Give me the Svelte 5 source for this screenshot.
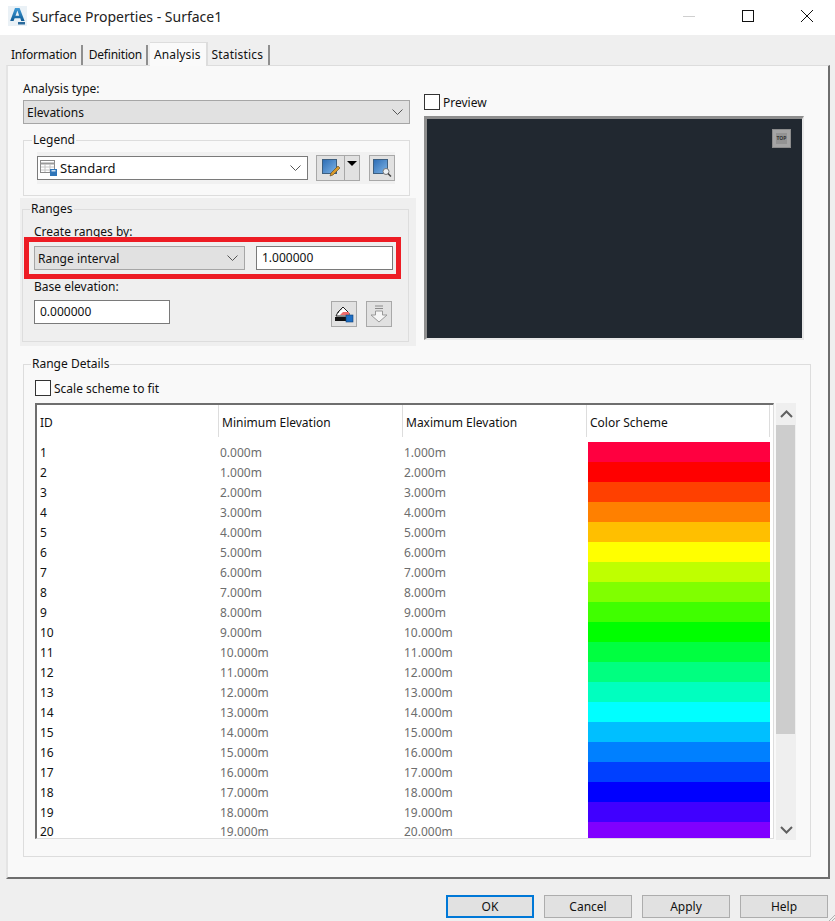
<script>
  const colors = ['#ff0040','#ff0000','#ff4000','#ff8000','#ffbf00','#ffff00','#bfff00','#80ff00','#40ff00','#00ff00','#00ff40','#00ff80','#00ffbf','#00ffff','#00bfff','#0080ff','#0040ff','#0000ff','#4000ff','#8000ff'];
  const rows = colors.map((color, i) => ({ id: i + 1, min: i.toFixed(3) + 'm', max: (i + 1).toFixed(3) + 'm', color }));
  const tabs = ['Information', 'Definition', 'Analysis', 'Statistics'];
</script>

<div class="window">
  <header class="titlebar">
    <svg class="logo" width="19" height="20" viewBox="0 0 19 20">
      <defs><linearGradient id="lg" x1="0" y1="0" x2="0" y2="1"><stop offset="0" stop-color="#3f9ad6"/><stop offset="1" stop-color="#0f5c96"/></linearGradient></defs>
      <rect width="19" height="20" fill="#eaf1f6"/>
      <path d="M7 2h4.600l5 13h-3.400l-.9-2.700H6.600L5.600 15H2.200zM7.500 9.800h3.700L9.400 4.600z" fill="url(#lg)"/>
      <rect x="10" y="16" width="7" height="2.500" fill="#2a6a9c"/>
    </svg>
    <span class="title">Surface Properties - Surface1</span>
    <div class="winbtns">
      <svg width="14" height="14" viewBox="0 0 14 14"><path d="M1 7.500h12" stroke="#cfcfcf" fill="none"/></svg>
      <svg width="14" height="14" viewBox="0 0 14 14"><rect x="1.500" y="1.500" width="11" height="11" fill="none" stroke="#111"/></svg>
      <svg width="14" height="14" viewBox="0 0 14 14"><path d="M1 1l12 12M13 1L1 13" stroke="#111" fill="none"/></svg>
    </div>
  </header>

  <nav class="tabs">
    {#each tabs as t}
      <div class="tab" class:active={t === 'Analysis'}>{t}</div>
    {/each}
  </nav>

  <main class="panel">
    <div class="upper">
      <div class="left">
        <div class="section">
          <div class="label">Analysis type:</div>
          <div class="combo gray wide">
            <span>Elevations</span>
            <svg class="chev" width="11" height="6" viewBox="0 0 11 6"><path d="M.5.500l5 5 5-5" fill="none" stroke="#555"/></svg>
          </div>
          <fieldset class="legend-box">
            <legend>Legend</legend>
            <div class="legend-row">
              <div class="combo white legend-combo">
                <svg class="tblicon" width="17" height="16" viewBox="0 0 17 16">
                  <rect x=".5" y=".5" width="14" height="12" fill="#fff" stroke="#8a8a8a"/>
                  <path d="M.5 3.500h14" stroke="#9a9a9a" stroke-width="2"/>
                  <path d="M5 4v8M10 4v8M1 7h13M1 10h13" stroke="#c4c4c4"/>
                  <rect x="10" y="9" width="7" height="7" fill="#2f75b8"/>
                  <rect x="11.500" y="10" width="4" height="1.500" fill="#cfe4f6"/>
                </svg>
                <span class="std">Standard</span>
                <svg class="chev" width="11" height="6" viewBox="0 0 11 6"><path d="M.5.500l5 5 5-5" fill="none" stroke="#555"/></svg>
              </div>
              <div class="split">
                <div class="iconbtn flat">
                  <svg width="20" height="20" viewBox="0 0 20 20">
                    <defs><linearGradient id="bl" x1="0" y1="0" x2="1" y2="1"><stop offset="0" stop-color="#2c6cb4"/><stop offset="1" stop-color="#7fb4e6"/></linearGradient></defs>
                    <rect x="1.500" y="1.500" width="14" height="14" fill="url(#bl)" stroke="#3d5f80"/>
                    <path d="M9 18l1-3 7-7 2 2-7 7z" fill="#d99a2b" stroke="#5a4520" stroke-width=".6"/>
                  </svg>
                </div>
                <div class="iconbtn drop"><svg width="10" height="5" viewBox="0 0 10 5"><path d="M0 0h10L5 5z" fill="#000"/></svg></div>
              </div>
              <div class="iconbtn">
                <svg width="20" height="20" viewBox="0 0 20 20">
                  <rect x="1.500" y="1.500" width="14" height="14" fill="url(#bl)" stroke="#3d5f80"/>
                  <circle cx="14" cy="13.500" r="3" fill="#eef2f5" stroke="#777"/>
                  <path d="M16 15.500l3 3" stroke="#444" stroke-width="1.500"/>
                </svg>
              </div>
            </div>
          </fieldset>
        </div>

        <div class="ranges-wrap">
          <fieldset class="ranges">
            <legend>Ranges</legend>
            <div class="label create">Create ranges by:</div>
            <div class="redbox">
              <div class="combo gray range-combo">
                <span>Range interval</span>
                <svg class="chev" width="11" height="6" viewBox="0 0 11 6"><path d="M.5.500l5 5 5-5" fill="none" stroke="#555"/></svg>
              </div>
              <div class="field interval">1.000000</div>
            </div>
            <div class="label base">Base elevation:</div>
            <div class="base-row">
              <div class="field base-field">0.000000</div>
              <div class="iconbtn">
                <svg width="20" height="20" viewBox="0 0 20 20">
                  <path d="M2 12l2-4 5-5 6 6v3z" fill="#fff" stroke="#222"/>
                  <path d="M4 9l5-6" stroke="#222" stroke-dasharray="1 1" fill="none"/>
                  <path d="M6 11l3-3h6v3z" fill="#ef6a6a"/>
                  <rect x="1" y="13" width="11" height="4" fill="#111"/>
                  <rect x="12" y="11" width="7" height="7" fill="#1e6fc4" stroke="#0f3f75" stroke-width=".6"/>
                </svg>
              </div>
              <div class="iconbtn">
                <svg width="20" height="20" viewBox="0 0 20 20">
                  <path d="M6 2h8M6 4.500h8" stroke="#8a8a8a"/>
                  <path d="M6.500 7h7v4h4.500L10 18 2 11h4.500z" fill="#f6f6f6" stroke="#999"/>
                </svg>
              </div>
            </div>
          </fieldset>
        </div>
      </div>

      <div class="right">
        <label class="check preview-check"><span class="box"></span><span>Preview</span></label>
        <div class="preview">
          <div class="cube"><span class="cube-inner">TOP</span></div>
        </div>
      </div>
    </div>

    <fieldset class="details">
      <legend>Range Details</legend>
      <label class="check scale"><span class="box"></span><span>Scale scheme to fit</span></label>
      <div class="table-row">
        <div class="table">
          <div class="thead">
            <div class="th first">ID</div>
            <div class="th">Minimum Elevation</div>
            <div class="th">Maximum Elevation</div>
            <div class="th last">Color Scheme</div>
          </div>
          {#each rows as r}
            <div class="tr">
              <div class="td id">{r.id}</div>
              <div class="td val">{r.min}</div>
              <div class="td val">{r.max}</div>
              <div class="swatch" style="background:{r.color}"></div>
            </div>
          {/each}
        </div>
        <div class="scrollbar">
          <div class="arrow"><svg width="13" height="8" viewBox="0 0 13 8"><path d="M1 7l5.500-5.500L12 7" fill="none" stroke="#606060" stroke-width="2"/></svg></div>
          <div class="thumb"></div>
          <div class="rest"></div>
          <div class="arrow down"><svg width="13" height="8" viewBox="0 0 13 8"><path d="M1 1l5.500 5.500L12 1" fill="none" stroke="#606060" stroke-width="2"/></svg></div>
        </div>
      </div>
    </fieldset>
  </main>

  <footer class="footer">
    <button class="ok">OK</button>
    <button>Cancel</button>
    <button>Apply</button>
    <button>Help</button>
  </footer>
  <svg class="grip" width="6" height="6" viewBox="0 0 6 6"><path d="M6 0L0 6M6 3L3 6" stroke="#b0b0b0" fill="none"/></svg>
</div>

<style>
  :global(body) { margin: 0; }
  .window {
    width: 835px; height: 921px; background: #efefef; overflow: hidden; position: relative;
    font-family: "Noto Sans", "Open Sans", sans-serif; font-size: 12px; color: #111; box-sizing: border-box;
  }
  .titlebar { height: 35px; background: #fff; display: flex; align-items: center; padding: 0 0 3px 8px; box-sizing: border-box; }
  .title { margin-left: 5px; font-size: 14px; color: #222; }
  .winbtns { margin-left: auto; display: flex; gap: 45px; padding-right: 21px; align-items: center; }
  .tabs { height: 30px; display: flex; align-items: flex-end; padding-left: 7px; box-sizing: border-box; }
  .tab {
    height: 20px; line-height: 20px; padding: 0 4px; border-right: 2px solid #8f8f8f; margin-right: 2px;
    position: relative; letter-spacing: -.2px;
  }
  .tab:last-child { letter-spacing: .2px; padding-right: 5px; }
  .tab.active { background: #fafafa; height: 23px; line-height: 24px; padding: 0 5px 0 4px; border-right: 2px solid #ddd; border-top: 1px solid #ddd; margin: 0 0 -1px 0; z-index: 1; letter-spacing: .1px; }
  .panel {
    width: 824px; height: 814px; margin-left: 6px; background: #f9f9f9; box-sizing: border-box;
    border-top: 1px solid #ddd; border-left: 2px solid #e4e4e4; border-right: 2px solid #6e6e6e; border-bottom: 2px solid #6e6e6e;
  }
  .upper { display: flex; height: 277px; }
  .left { width: 396px; margin-left: 12px; }
  .section { padding: 13px 6px 0 3px; }
  .label { height: 20px; line-height: 20px; }
  .combo { display: flex; align-items: center; box-sizing: border-box; height: 24px; border: 1px solid #a6a6a6; padding: 0 6px 0 3px; }
  .combo .chev { margin-left: auto; }
  .gray { background: #e1e1e1; }
  .white { background: #fff; border-color: #7a7a7a; }
  .wide { width: 387px; margin-top: 1px; }
  fieldset { margin: 0; padding: 0; border: 1px solid #ddd; min-width: 0; }
  legend { padding: 0 1px; line-height: 16px; }
  .legend-box { width: 387px; box-sizing: border-box; height: 64px; margin-top: 8px; }
  .legend-box legend { margin-left: 8px; }
  .legend-row {
    display: flex; align-items: center; margin: 4px 14px 0 13px; height: 32px; background: #f1f1f1;
  }
  .legend-combo { width: 271px; padding-left: 2px; flex: none; }
  .tblicon { margin-right: 3px; }
  .std { font-size: 13px; }
  .split { display: flex; margin-left: 8px; }
  .iconbtn {
    width: 26px; height: 26px; box-sizing: border-box; border: 1px solid #a8a8a8; background: #e1e1e1;
    display: flex; align-items: center; justify-content: center; flex: none;
  }
  .legend-row > .iconbtn { margin-left: 9px; }
  .iconbtn.flat { width: 28px; border-right: 0; }
  .iconbtn.drop { width: 16px; align-items: flex-start; padding-top: 5px; }
  .ranges-wrap { background: #efefef; padding: 3px 7px 4px 2px; height: 148px; box-sizing: border-box; margin-top: 2px; }
  .ranges { height: 141px; box-sizing: border-box; position: relative; }
  .ranges legend { margin-left: 7px; }
  .create { margin: 5px 0 0 11px; height: 15px; line-height: 20px; }
  .redbox {
    position: relative; box-sizing: border-box; width: 377px; height: 42px; margin-left: 1px; border: 5px solid #ed1c24;
    padding: 4px 3px 4px 5px; display: flex; justify-content: space-between; background: #efefef;
  }
  .range-combo { width: 211px; }
  .field { box-sizing: border-box; height: 24px; line-height: 22px; background: #fff; border: 1px solid #7a7a7a; padding-left: 5px; }
  .interval { width: 137px; }
  .base { margin: -2px 0 0 11px; height: 23px; }
  .base-row { display: flex; align-items: flex-start; margin-left: 11px; }
  .base-field { width: 136px; }
  .base-row .iconbtn { margin-top: 1px; margin-left: 161px; }
  .base-row .iconbtn + .iconbtn { margin-left: 9px; }
  .right { margin-left: 8px; width: 380px; padding-top: 28px; }
  .check { display: flex; align-items: center; height: 16px; }
  .box { width: 16px; height: 16px; box-sizing: border-box; border: 1px solid #333; background: #fff; margin-right: 3px; }
  .preview {
    margin-top: 6px; width: 380px; height: 224px; box-sizing: border-box; background: #212830; position: relative;
    border-top: 3px solid #8e8e8e; border-left: 3px solid #8e8e8e; border-right: 2px solid #e8e8e8; border-bottom: 2px solid #e8e8e8;
  }
  .cube {
    position: absolute; top: 10px; right: 11px; width: 19px; height: 19px; box-sizing: border-box; background: #a5a5a5; border: 1px solid #8c8c8c;
    display: flex; align-items: center; justify-content: center;
  }
  .cube-inner { width: 11px; height: 11px; background: #939393; color: #333; font-size: 5px; line-height: 11px; text-align: center; font-weight: 700; overflow: hidden; }
  .details { width: 788px; height: 501px; box-sizing: border-box; margin: 13px 0 0 15px; padding-left: 11px; }
  .details legend { margin-left: -4px; }
  .scale { margin-top: 8px; }
  .table-row { display: flex; margin-top: 7px; }
  .table {
    width: 739px; height: 436px; box-sizing: border-box; overflow: hidden; background: #fff;
    border-top: 2px solid #6e6e6e; border-left: 2px solid #6e6e6e; border-right: 1px solid #ddd; border-bottom: 1px solid #ddd; padding-right: 2px;
  }
  .thead, .tr { display: grid; grid-template-columns: 182px 184px 184px 183px; }
  .thead { height: 37px; }
  .th { height: 32px; line-height: 36px; border-right: 1px solid #ddd; padding-left: 3px; box-sizing: border-box; }
  .tr { height: 20px; }
  .tr:last-child { height: 17px; }
  .td { line-height: 20px; padding-top: 1px; box-sizing: border-box; }
  .tr:last-child .td { line-height: 14px; padding-top: 3px; height: 17px; }
  .td.id { padding-left: 3px; color: #111; }
  .td.val { color: #6d6d6d; padding-left: 1px; }
  .swatch { margin-left: 1px; }
  .scrollbar { width: 20px; height: 437px; margin-left: 2px; background: #efefef; display: flex; flex-direction: column; }
  .arrow { height: 21px; display: flex; align-items: center; justify-content: center; flex: none; }
  .arrow:first-child { height: 22px; }
  .thumb { height: 309px; width: 19px; background: #cdcdcd; flex: none; }
  .rest { flex: 1; }
  .footer { display: flex; padding: 16px 0 0 446px; gap: 10px; }
  button {
    width: 88px; height: 23px; box-sizing: border-box; padding: 0; margin: 0; background: #e1e1e1; border: 1px solid #adadad;
    font: inherit; color: #111;
  }
  button.ok { border: 2px solid #0078d7; }
  .grip { position: absolute; right: 0; bottom: 0; }
</style>
